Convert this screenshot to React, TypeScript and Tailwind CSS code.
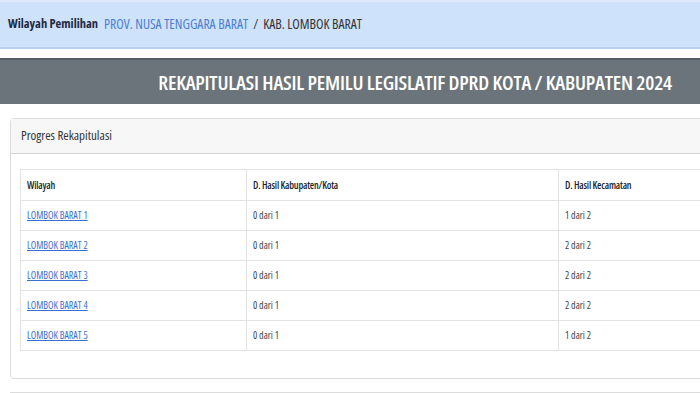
import React from "react";

const rows = [
    { name: "LOMBOK BARAT 1", kab: "0 dari 1", kec: "1 dari 2" },
    { name: "LOMBOK BARAT 2", kab: "0 dari 1", kec: "2 dari 2" },
    { name: "LOMBOK BARAT 3", kab: "0 dari 1", kec: "2 dari 2" },
    { name: "LOMBOK BARAT 4", kab: "0 dari 1", kec: "2 dari 2" },
    { name: "LOMBOK BARAT 5", kab: "0 dari 1", kec: "1 dari 2" },
];

export default function App() {
    return (
        <div className="w-[700px] h-[393px] overflow-hidden bg-white text-[#212529] font-['Open_Sans',sans-serif]">
            {/* breadcrumb wilayah */}
            <div className="h-[49px] bg-[#cfe2fb] border-t-2 border-b-2 border-t-[#dde9fb] border-b-[#b8cfee] flex items-center pl-[8px] pb-[1px] [font-stretch:75%]">
                <span className="text-[12.5px] font-bold text-[#1c2a40] mr-[6px]">Wilayah Pemilihan</span>
                <a href="#" className="text-[13.7px] text-[#4a7fd0]">PROV. NUSA TENGGARA BARAT</a>
                <span className="text-[13.7px] mx-[5px] text-[#444]">/</span>
                <span className="text-[13.7px] text-[#333]">KAB. LOMBOK BARAT</span>
            </div>

            <div className="mt-[9px] h-[46px] bg-[#6c747b] border-t-2 border-[#565d64] flex items-center justify-end pr-[28px]">
                <h1 className="text-white text-[20.4px] font-semibold [font-stretch:75%] tracking-[-0.2px]">
                    REKAPITULASI HASIL PEMILU LEGISLATIF DPRD KOTA / KABUPATEN 2024
                </h1>
            </div>

            <div className="mt-[14px] ml-[10px] w-[730px] border border-[#dcdcdc] rounded-[4px]">
                <div className="h-[35px] bg-[#f7f7f7] border-b border-[#d6d6d6] flex items-center px-[10px] text-[13px] text-[#333] [font-stretch:75%]">
                    Progres Rekapitulasi
                </div>
                <div className="px-[9px] pt-[15px] pb-[27px]">
                    <table className="w-[720px] border-collapse text-[10px] [font-stretch:75%]">
                        <thead>
                            <tr className="h-[31px]">
                                <th className="w-[226px] border border-[#e3e3e3] text-left font-semibold tracking-[-0.2px] px-[6px]">Wilayah</th>
                                <th className="w-[312px] border border-[#e3e3e3] text-left font-semibold tracking-[-0.2px] px-[6px]">D. Hasil Kabupaten/Kota</th>
                                <th className="border border-[#e3e3e3] text-left font-semibold tracking-[-0.2px] px-[6px]">D. Hasil Kecamatan</th>
                            </tr>
                        </thead>
                        <tbody>
                            {rows.map((r) => (
                                <tr key={r.name} className="h-[30px]">
                                    <td className="border border-[#e3e3e3] px-[6px]">
                                        <a href="#" className="text-[#3a6fd0] underline">{r.name}</a>
                                    </td>
                                    <td className="border border-[#e3e3e3] px-[6px] text-[#444]">{r.kab}</td>
                                    <td className="border border-[#e3e3e3] px-[6px] text-[#444]">{r.kec}</td>
                                </tr>
                            ))}
                        </tbody>
                    </table>
                </div>
            </div>

            <div className="mt-[13px] ml-[10px] w-[730px] border-t border-[#dcdcdc]" />
        </div>
    );
}
